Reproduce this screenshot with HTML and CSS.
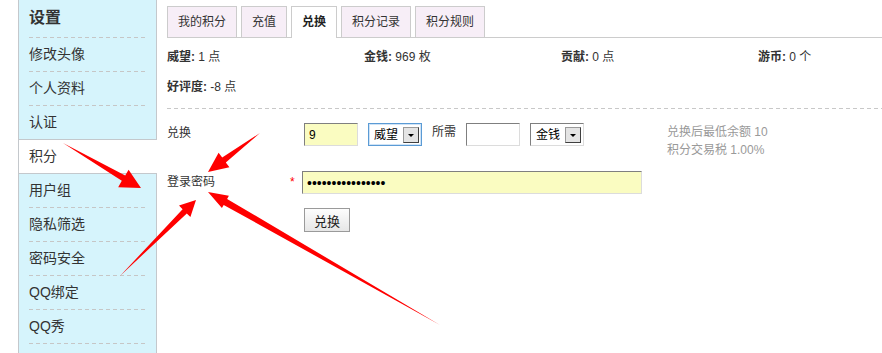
FILE: index.html
```html
<!DOCTYPE html>
<html lang="zh-CN">
<head>
<meta charset="utf-8">
<title>积分 - 兑换</title>
<link rel="stylesheet" href="styles.css">
</head>
<body>
<div class="page">
  <aside class="side">
    <h2 class="side-title">设置</h2>
    <ul class="side-list">
      <li class="side-item">修改头像</li>
      <li class="side-item">个人资料</li>
      <li class="side-item no-sep">认证</li>
      <li class="side-item active">积分</li>
      <li class="side-item">用户组</li>
      <li class="side-item">隐私筛选</li>
      <li class="side-item">密码安全</li>
      <li class="side-item">QQ绑定</li>
      <li class="side-item">QQ秀</li>
    </ul>
  </aside>

  <main class="content">
    <ul class="tabs">
      <li class="tab">我的积分</li>
      <li class="tab">充值</li>
      <li class="tab active">兑换</li>
      <li class="tab">积分记录</li>
      <li class="tab">积分规则</li>
    </ul>

    <div class="stats">
      <div class="stat"><b>威望:</b> 1 点</div>
      <div class="stat"><b>金钱:</b> 969 枚</div>
      <div class="stat"><b>贡献:</b> 0 点</div>
      <div class="stat"><b>游币:</b> 0 个</div>
      <div class="stat"><b>好评度:</b> -8 点</div>
    </div>

    <div class="divider"></div>

    <form class="form">
      <div class="form-row row-exchange">
        <div class="label">兑换</div>
        <div class="star"></div>
        <div class="field">
          <input class="txt txt-yellow txt-amount" type="text" value="9">
          <span class="select focused"><span class="select-text">威望</span><span class="select-btn"></span></span>
          <span class="need">所需</span>
          <input class="txt txt-need" type="text" value="">
          <span class="select"><span class="select-text">金钱</span><span class="select-btn"></span></span>
        </div>
        <div class="hint">兑换后最低余额 10<br>积分交易税 1.00%</div>
      </div>

      <div class="form-row row-password">
        <div class="label label-mid">登录密码</div>
        <div class="star">*</div>
        <div class="field">
          <input class="txt txt-yellow txt-password" type="password" value="1234567890123456">
        </div>
        <div class="hint"></div>
      </div>

      <div class="form-row row-submit">
        <div class="label"></div>
        <div class="star"></div>
        <div class="field">
          <button class="btn" type="button">兑换</button>
        </div>
        <div class="hint"></div>
      </div>
    </form>
  </main>

  <svg class="arrows" width="882" height="353" viewBox="0 0 882 353" xmlns="http://www.w3.org/2000/svg">
    <polygon fill="#ff0000" points="63,143 121.8,180.8 118.2,187.2 141,188 128.6,169.8 125.2,175.4"/>
    <polygon fill="#ff0000" points="260,133 222.2,157.6 218.6,152.8 208,172 229.4,167.2 225.8,162.4"/>
    <polygon fill="#ff0000" points="120,276 186.8,213.4 190.4,217 196,200 179,205.6 182.6,209.2"/>
    <polygon fill="#ff0000" points="440,325 227.1,198.9 228.9,195.8 208,192 221.9,208 223.7,204.9"/>
  </svg>
</div>
</body>
</html>
```

FILE: styles.css
```css
* {
  box-sizing: border-box;
}

html, body {
  margin: 0;
  padding: 0;
  background: #ffffff;
}

body {
  font-family: "Liberation Sans", "Noto Sans CJK SC", sans-serif;
  font-size: 12px;
  color: #333333;
}

.page {
  position: relative;
  display: flex;
  height: 353px;
  overflow: hidden;
  padding-left: 18px;
}

/* ---------- sidebar ---------- */
.side {
  flex: none;
  width: 139px;
  background: #d6f4fc;
  border-left: 1px solid #c4c8cc;
  border-right: 1px solid #c4c8cc;
}

.side-title {
  position: relative;
  margin: 0;
  height: 38px;
  line-height: 36px;
  padding-left: 10px;
  font-size: 16px;
  font-weight: bold;
  color: #333;
}

.side-list {
  list-style: none;
  margin: 0;
  padding: 0;
}

.side-item {
  position: relative;
  height: 34px;
  line-height: 33px;
  padding-left: 10px;
  font-size: 14px;
  color: #333;
}

.side-title::after,
.side-item::after {
  content: "";
  position: absolute;
  left: 10px;
  right: 9px;
  bottom: 0;
  height: 1px;
  background: repeating-linear-gradient(to right, #c6c6c6 0 4px, transparent 4px 7px);
}

.side-item.no-sep {
  height: 33px;
}

.side-item.no-sep::after,
.side-item.active::after {
  display: none;
}

.side-item.active {
  height: 35px;
  background: #ffffff;
  border-top: 1px solid #c4c8cc;
  border-bottom: 1px solid #c4c8cc;
  margin-right: -1px;
}

/* ---------- content ---------- */
.content {
  flex: 1;
  min-width: 0;
  padding-left: 10px;
}

.tabs {
  display: flex;
  gap: 4px;
  list-style: none;
  margin: 0;
  padding: 6px 0 0;
  height: 38px;
  border-bottom: 1px solid #cccccc;
}

.tab {
  height: 31px;
  line-height: 30px;
  padding: 0 10px;
  border: 1px solid #cccccc;
  border-bottom: none;
  background: #f7eef7;
  color: #333;
}

.tab.active {
  height: 32px;
  background: #ffffff;
  font-weight: bold;
  color: #222;
}

.stats {
  display: grid;
  grid-template-columns: repeat(4, 197px);
  padding-top: 4px;
  line-height: 30px;
}

.stat b {
  color: #333;
}

.divider {
  margin-top: 6px;
  height: 1px;
  background: repeating-linear-gradient(to right, #c8c8c8 0 4px, transparent 4px 7px);
}

/* ---------- form ---------- */
.form {
  margin: 0;
  padding-top: 14px;
}

.form-row {
  display: grid;
  grid-template-columns: 123px 12px 365px 1fr;
  align-items: start;
}

.row-exchange {
  height: 36px;
}

.row-password {
  margin-top: 12px;
  align-items: center;
}

.row-submit {
  margin-top: 14px;
}

.label {
  line-height: 20px;
  color: #333;
}

.label-mid {
  line-height: 23px;
}

.star {
  color: #ff0000;
  line-height: 23px;
  font-size: 12px;
}

.field {
  display: flex;
  align-items: flex-start;
  gap: 10px;
}

.txt {
  height: 23px;
  margin: 0;
  padding: 0 4px;
  border: 1px solid;
  border-color: #7f7f7f #dcdcdc #dcdcdc #7f7f7f;
  background: #ffffff;
  font-family: "Liberation Sans", "Noto Sans CJK SC", sans-serif;
  font-size: 12px;
  color: #000;
  outline: none;
}

.txt-yellow {
  background: #fafcc1;
}

.txt-amount {
  width: 54px;
  margin-left: 2px;
}

.txt-need {
  width: 54px;
}

.txt-password {
  width: 340px;
  font-size: 14px;
  letter-spacing: 0;
}

.need {
  line-height: 18px;
  width: 24px;
}

.select {
  display: flex;
  align-items: center;
  justify-content: space-between;
  width: 54px;
  height: 23px;
  padding: 0 2px 0 5px;
  border: 1px solid;
  border-color: #7f7f7f #dcdcdc #dcdcdc #7f7f7f;
  background: #ffffff;
  color: #000;
}

.select.focused {
  border: 1px solid #5b9bd5;
  box-shadow: inset 0 0 0 1px #cfe3f6;
}

.select-text {
  line-height: 20px;
}

.select-btn {
  position: relative;
  width: 16px;
  height: 16px;
  border: 1px solid;
  border-color: #9a9a9a #404040 #404040 #9a9a9a;
  background: #e4e4e4;
}

.select-btn::after {
  content: "";
  position: absolute;
  left: 4px;
  top: 6px;
  border-left: 3px solid transparent;
  border-right: 3px solid transparent;
  border-top: 3px solid #000;
}

.btn {
  margin: 0 0 0 2px;
  width: 46px;
  height: 24px;
  padding: 0;
  border: 1px solid #9a9a9a;
  background: linear-gradient(#fdfdfd, #e6e6e6);
  font-family: "Liberation Sans", "Noto Sans CJK SC", sans-serif;
  font-size: 13px;
  color: #222;
}

.hint {
  padding-left: 0;
  line-height: 18px;
  color: #999999;
}

/* ---------- annotation overlay ---------- */
.arrows {
  position: absolute;
  left: 0;
  top: 0;
  pointer-events: none;
}
```
